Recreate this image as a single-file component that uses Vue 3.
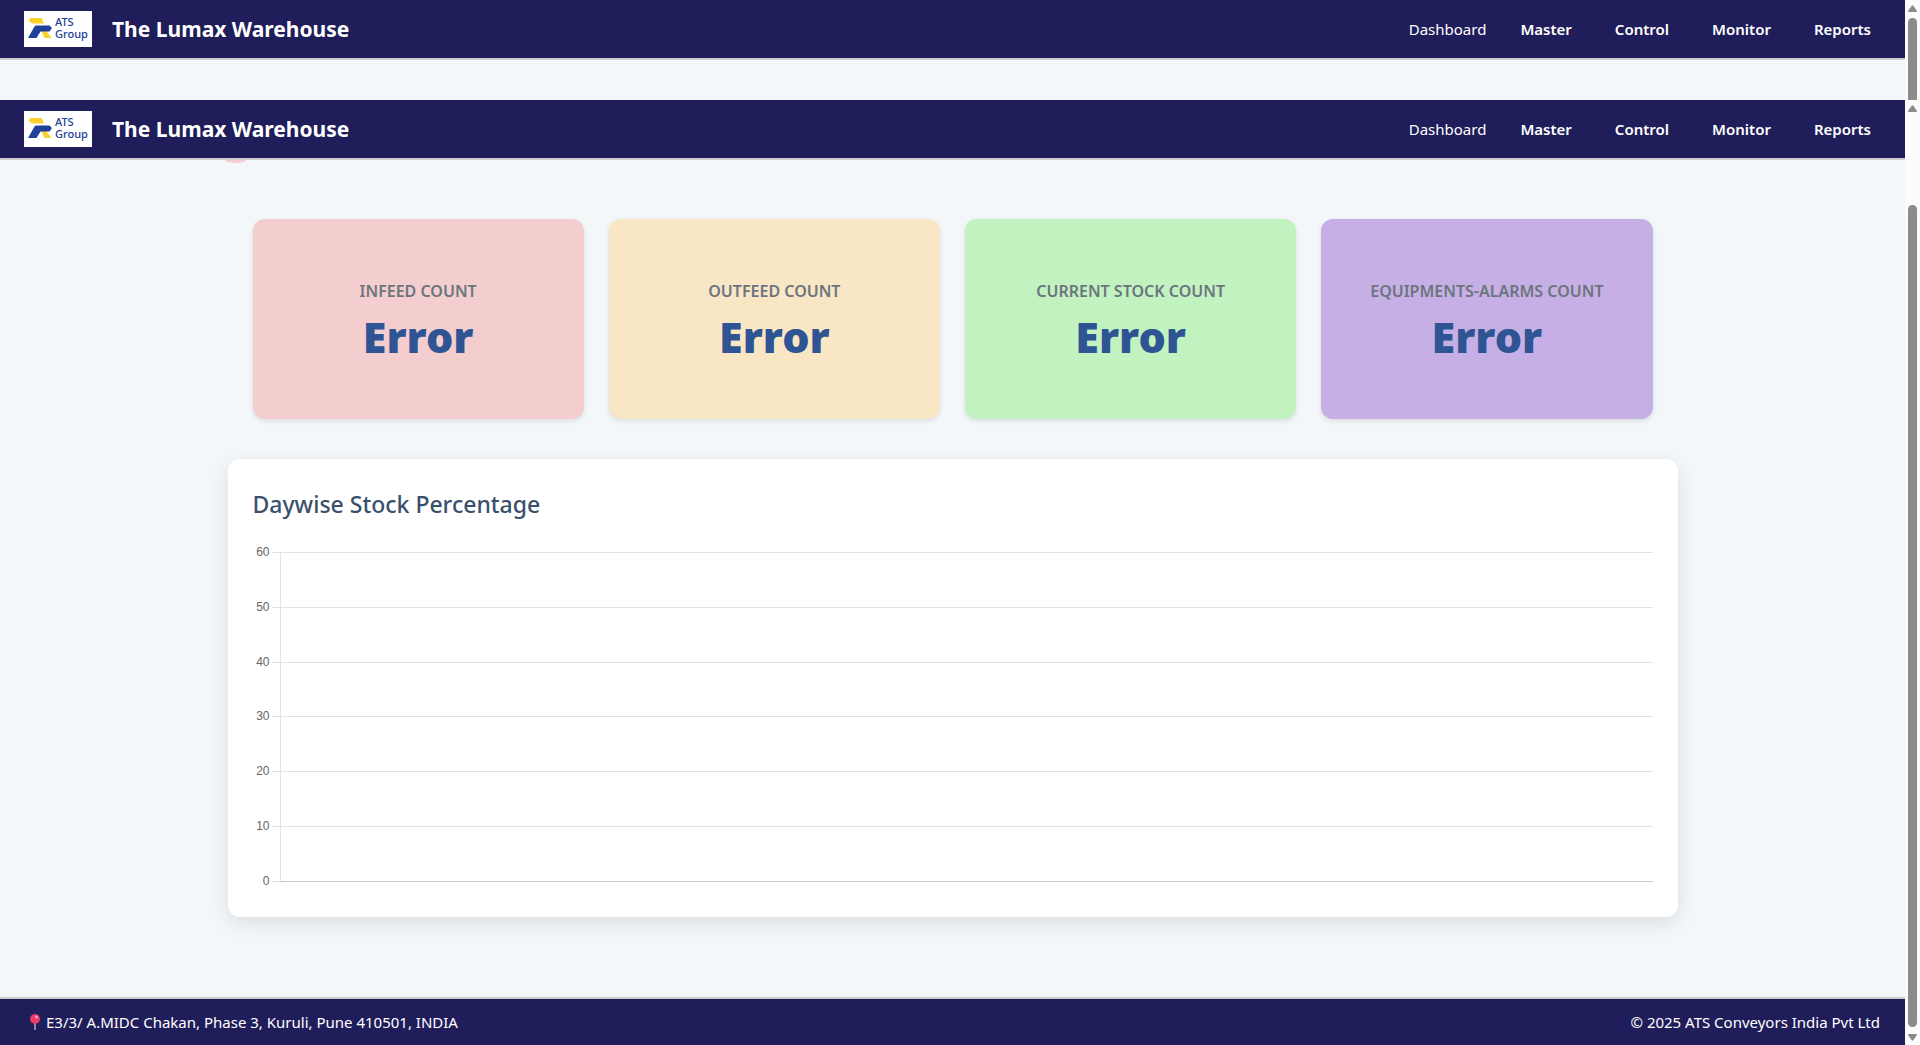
<script setup>
const navItems = ['Dashboard', 'Master', 'Control', 'Monitor', 'Reports']

const panes = ['outer', 'inner']

const cards = [
  { label: 'Infeed Count', value: 'Error', tone: 'pink' },
  { label: 'Outfeed Count', value: 'Error', tone: 'amber' },
  { label: 'Current Stock Count', value: 'Error', tone: 'green' },
  { label: 'Equipments-Alarms Count', value: 'Error', tone: 'violet' }
]

const ticks = [60, 50, 40, 30, 20, 10, 0]
</script>

<template>
  <div class="app">
    <section v-for="pane in panes" :key="pane" class="pane" :class="pane">
      <div class="page">
        <header class="topbar">
          <svg class="logo" viewBox="0 0 68 36" role="img" aria-label="ATS Group">
            <rect width="68" height="36" fill="#fff" />
            <path d="M6.500 7H17.500L20 12.500H8L4.500 9.500Z" fill="#fbd02b" />
            <path d="M17 19H21.500L27.500 27H20.500Z" fill="#fbd02b" />
            <path d="M12.500 14.500H25.500L28 17L25.500 20.500H16.500L12.500 27H4L10.500 15.500Q11 14.500 12.500 14.500Z" fill="#21409a" />
            <text x="31" y="15">ATS</text>
            <text x="31" y="27">Group</text>
          </svg>
          <h1 class="brand">The Lumax Warehouse</h1>
          <nav class="nav">
            <a v-for="(item, i) in navItems" :key="item" href="#" :class="{ plain: i === 0 }">{{ item }}</a>
          </nav>
        </header>

        <template v-if="pane === 'inner'">
          <main class="content">
            <span class="bubble"></span>
            <div class="cards">
              <article v-for="card in cards" :key="card.label" class="card" :class="card.tone">
                <h2 class="card-label">{{ card.label }}</h2>
                <p class="card-value">{{ card.value }}</p>
              </article>
            </div>
            <section class="panel">
              <h2 class="panel-title">Daywise Stock Percentage</h2>
              <div class="chart">
                <div v-for="tick in ticks" :key="tick" class="tick">
                  <span class="tick-label">{{ tick }}</span>
                  <span class="tick-mark"></span>
                  <span class="band"></span>
                </div>
              </div>
            </section>
          </main>
          <footer class="footer">
            <span class="address">
              <svg class="pin" viewBox="0 0 10 16" aria-hidden="true">
                <rect x="4" y="8" width="2" height="8" fill="#8d86a8" />
                <circle cx="5" cy="5" r="5" fill="#e83b6e" />
                <circle cx="6.500" cy="3" r="1.500" fill="#ff9dba" />
              </svg>
              <span>E3/3/ A.MIDC Chakan, Phase 3, Kuruli, Pune 410501, INDIA</span>
            </span>
            <span>© 2025 ATS Conveyors India Pvt Ltd</span>
          </footer>
        </template>
      </div>
      <div class="rail" aria-hidden="true">
        <svg class="arrow" viewBox="0 0 9 7"><path d="M3.500 1Q4.500 -.5 5.500 1L9 6Q9 7 8 7H1Q0 7 0 6Z" /></svg>
        <div class="thumb"></div>
        <svg v-if="pane === 'inner'" class="arrow" viewBox="0 0 9 7"><path d="M3.500 6Q4.500 7.500 5.500 6L9 1Q9 0 8 0H1Q0 0 0 1Z" /></svg>
      </div>
    </section>
  </div>
</template>

<style>
body {
  margin: 0;
  background: #f3f7fa;
}
</style>

<style scoped>
.app {
  display: flex;
  flex-direction: column;
  min-height: 100vh;
  font-family: "Segoe UI", "Noto Sans", "Open Sans", sans-serif;
  font-size: 15px;
  color: #fff;
}
.pane {
  display: flex;
  background: #f3f7fa;
}
.outer {
  height: 100px;
}
.inner {
  flex: 1;
}
.page {
  flex: 1;
  display: flex;
  flex-direction: column;
  min-width: 0;
}
.topbar {
  display: flex;
  align-items: center;
  height: 58px;
  padding: 0 34px 0 24px;
  background: #1f1d5a;
  border-bottom: 2px solid #ccc;
}
.logo {
  width: 68px;
  height: 36px;
}
.logo text {
  font-family: "Noto Sans", sans-serif;
  font-size: 11px;
  font-weight: 500;
  fill: #21409a;
}
.brand {
  margin: 0 auto 0 20px;
  font-size: 21px;
  line-height: 28px;
  font-weight: 700;
}
.nav {
  display: flex;
  gap: 43px;
}
.nav a {
  color: inherit;
  text-decoration: none;
  font-weight: 600;
}
.nav .plain {
  font-weight: 400;
  margin-right: -9px;
}
.content {
  position: relative;
  flex: 1;
  box-sizing: border-box;
  width: 100%;
  max-width: 1450px;
  margin: 0 auto;
  padding: 59px 0 80px;
}
.bubble {
  position: absolute;
  top: 0;
  left: -3px;
  width: 21px;
  height: 3px;
  border-radius: 0 0 50% 50% / 0 0 100% 100%;
  background: #f4cdce;
}
.cards {
  display: grid;
  grid-template-columns: repeat(4, 1fr);
  gap: 25px;
  padding: 0 25px;
}
.card {
  display: flex;
  flex-direction: column;
  align-items: center;
  justify-content: center;
  gap: 6px;
  box-sizing: border-box;
  height: 200px;
  padding-top: 6px;
  border-radius: 12px;
  box-shadow: 0 2px 5px rgba(0, 0, 0, 0.1);
}
.pink { background: #f4cdce; }
.amber { background: #f9e6c5; }
.green { background: #c3f2c1; }
.violet { background: #c5afe5; }
.card-label {
  margin: 0;
  font-size: 16px;
  line-height: 24px;
  font-weight: 600;
  text-transform: uppercase;
  color: #6c757d;
}
.card-value {
  margin: 0;
  font-size: 43px;
  line-height: 56px;
  font-weight: 900;
  color: #2f5493;
}
.panel {
  margin-top: 40px;
  padding: 25px 25px 35px;
  border-radius: 12px;
  background: #fff;
  box-shadow: 0 6px 20px rgba(0, 0, 0, 0.1);
}
.panel-title {
  margin: 0;
  font-size: 23px;
  line-height: 40px;
  font-weight: 500;
  color: #3a506b;
}
.chart {
  display: flex;
  flex-direction: column;
  height: 330px;
  margin-top: 28px;
}
.tick {
  flex: 1;
  display: flex;
  align-items: flex-start;
}
.tick:last-child {
  flex: none;
  height: 1px;
}
.tick-label {
  width: 17px;
  margin-right: 2px;
  margin-top: -8px;
  font: 12px/16px "Liberation Sans", Arial, sans-serif;
  text-align: right;
  color: #666;
}
.tick-mark {
  width: 8px;
  height: 1px;
  background: #e2e2e2;
}
.band {
  flex: 1;
  align-self: stretch;
  border-top: 1px solid #e2e2e2;
  border-left: 1px solid #e2e2e2;
}
.tick:last-child .band {
  border-color: #c9c9c9;
}
.footer {
  display: flex;
  align-items: center;
  justify-content: space-between;
  height: 46px;
  padding: 0 25px 0 30px;
  background: #1f1d5a;
  border-top: 2px solid #ccc;
}
.address {
  display: flex;
  align-items: center;
  gap: 6px;
}
.pin {
  width: 10px;
  height: 16px;
}
.rail {
  display: flex;
  flex-direction: column;
  align-items: center;
  box-sizing: border-box;
  width: 15px;
  padding-top: 5px;
  background: #fcfcfc;
}
.arrow {
  width: 9px;
  height: 7px;
  fill: #8b8b8b;
}
.thumb {
  flex: 1;
  width: 9px;
  margin-top: 6px;
  border-radius: 5px 5px 0 0;
  background: #8b8b8b;
}
.inner .rail {
  padding-bottom: 4px;
}
.inner .thumb {
  margin: 93px 0 7px;
  border-radius: 5px;
}
</style>
